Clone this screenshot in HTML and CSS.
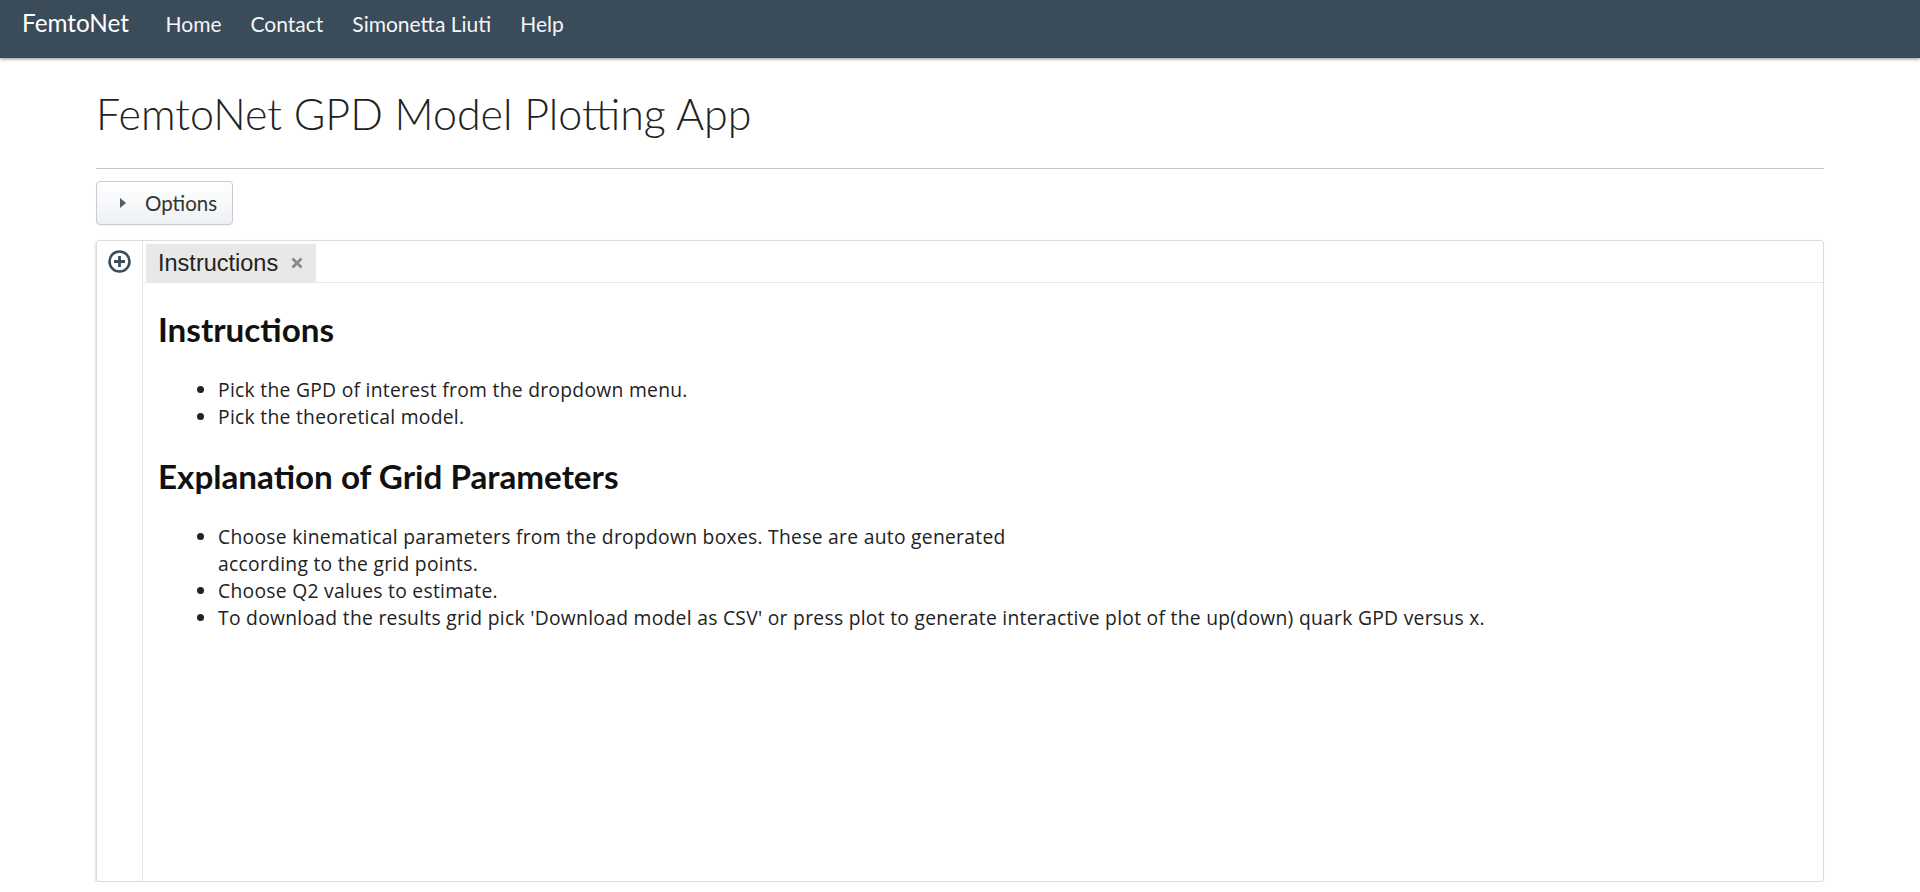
FILE: index.html
```html
<!DOCTYPE html>
<html lang="en">
<head>
<meta charset="utf-8">
<title>FemtoNet GPD Model Plotting App</title>
<link rel="stylesheet" href="styles.css">
</head>
<body>
<nav class="navbar">
  <span class="brand">FemtoNet</span>
  <a class="nav-link" href="#">Home</a>
  <a class="nav-link" href="#">Contact</a>
  <a class="nav-link" href="#">Simonetta Liuti</a>
  <a class="nav-link" href="#">Help</a>
</nav>
<main class="container">
  <h1 class="title">FemtoNet GPD Model Plotting App</h1>
  <hr class="rule">
  <button class="options-btn" type="button"><span class="caret"></span>Options</button>
  <section class="panel">
    <div class="panel-side">
      <svg class="add-icon" width="23" height="23" viewBox="0 0 23 23" aria-hidden="true">
        <circle cx="11.5" cy="11.5" r="10" fill="none" stroke="#3b4c5a" stroke-width="2.6"/>
        <path d="M11.5 6v11M6 11.5h11" stroke="#3b4c5a" stroke-width="2.8" fill="none"/>
      </svg>
    </div>
    <div class="panel-main">
      <div class="tabbar">
        <div class="tab">Instructions<svg class="tab-close" width="12" height="12" viewBox="0 0 12 12" aria-hidden="true"><path d="M1.5 1.5l9 9M10.5 1.5l-9 9" stroke="#8a8a8a" stroke-width="2.8" stroke-linecap="butt" fill="none"/></svg></div>
      </div>
      <div class="tab-content">
        <h2 class="heading">Instructions</h2>
        <ul class="list">
          <li>Pick the GPD of interest from the dropdown menu.</li>
          <li>Pick the theoretical model.</li>
        </ul>
        <h2 class="heading">Explanation of Grid Parameters</h2>
        <ul class="list list-second">
          <li>Choose kinematical parameters from the dropdown boxes. These are auto generated<br>according to the grid points.</li>
          <li>Choose Q2 values to estimate.</li>
          <li>To download the results grid pick 'Download model as CSV' or press plot to generate interactive plot of the up(down) quark GPD versus x.</li>
        </ul>
      </div>
    </div>
  </section>
</main>
</body>
</html>
```

FILE: styles.css
```css
html, body {
  margin: 0;
  padding: 0;
}

body {
  font-family: Lato, "Open Sans", sans-serif;
  color: #222;
  background: #fff;
}

.navbar {
  height: 58px;
  box-sizing: border-box;
  background: #3a4b5a;
  box-shadow: 0 1px 3px rgba(0, 0, 0, 0.45);
  display: flex;
  align-items: baseline;
  padding: 8px 0 0 22px;
}

.brand {
  color: #fff;
  font-size: 24.3px;
  line-height: 1.2;
  margin-right: 22px;
}

.nav-link {
  color: #f4f6f8;
  font-size: 21px;
  line-height: 1.2;
  text-decoration: none;
  padding: 0 14.5px;
}

.container {
  padding: 0 96px;
}

.title {
  font-weight: 300;
  font-size: 43px;
  line-height: 1.1;
  margin: 32px 0 0;
  color: #222;
}

.rule {
  border: 0;
  border-top: 1px solid #c6c6c6;
  margin: 31px 0 0;
}

.options-btn {
  margin-top: 12px;
  display: flex;
  align-items: center;
  height: 44px;
  width: 137px;
  box-sizing: border-box;
  padding: 0 0 0 23px;
  border: 1px solid #c9cdd1;
  border-radius: 4px;
  background: linear-gradient(#ffffff, #eef1f4);
  font-family: Lato, "Open Sans", sans-serif;
  font-size: 20.5px;
  color: #333;
  box-shadow: 0 1px 1px rgba(0, 0, 0, 0.06);
}

.caret {
  width: 0;
  height: 0;
  border-top: 5.5px solid transparent;
  border-bottom: 5.5px solid transparent;
  border-left: 6px solid #4f5d6a;
  margin-right: 19px;
}

.panel {
  margin-top: 15px;
  height: 642px;
  box-sizing: border-box;
  border: 1px solid #dcdcdc;
  border-radius: 3px;
  box-shadow: -1px 1px 2px rgba(0, 0, 0, 0.12);
  display: flex;
}

.panel-side {
  width: 46px;
  flex: none;
  border-right: 1px solid #e6e6e6;
  display: flex;
  justify-content: center;
  padding-top: 9px;
  box-sizing: border-box;
}

.add-icon {
  display: block;
}

.panel-main {
  flex: 1;
  min-width: 0;
}

.tabbar {
  display: flex;
  padding: 3px 0 0 3px;
  border-bottom: 1px solid #e6e6e6;
}

.tab {
  background: #e8e8e8;
  height: 38px;
  line-height: 38px;
  padding: 0 13px 0 12px;
  font-family: "Liberation Sans", Arial, sans-serif;
  font-size: 23.5px;
  color: #222;
  display: flex;
  align-items: center;
}

.tab-close {
  display: block;
  margin-left: 13px;
}

.tab-content {
  padding: 0 15px;
}

.heading {
  font-size: 33.2px;
  font-weight: 700;
  line-height: 1.1;
  margin: 28px 0 0;
  color: #111;
}

.list {
  margin: 28px 0 0;
  padding-left: 60px;
  font-family: "Open Sans", Lato, sans-serif;
  font-size: 19.3px;
  letter-spacing: 0.28px;
  line-height: 27px;
  color: #222;
}

.list-second {
  margin-top: 29px;
}
```
